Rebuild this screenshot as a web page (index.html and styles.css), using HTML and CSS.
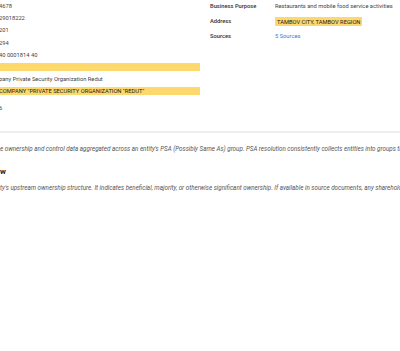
FILE: index.html
```html
<!DOCTYPE html>
<html lang="en">
<head>
    <meta charset="UTF-8">
    <meta name="viewport" content="width=device-width, initial-scale=1.0">
    <title>Entity profile</title>
    <link rel="stylesheet" href="styles.css">
</head>
<body>

<main class="page">
    <section class="details">
        <div class="col col-left">
            <div class="row"><span class="value">4678</span></div>
            <div class="row"><span class="value">29018222</span></div>
            <div class="row"><span class="value">201</span></div>
            <div class="row"><span class="value">294</span></div>
            <div class="row"><span class="value">40 0001814 40</span></div>
            <div class="row"><span class="value mark mark-full">&nbsp;</span></div>
            <div class="row"><span class="value">pany Private Security Organization Redut</span></div>
            <div class="row"><span class="value mark mark-full">COMPANY "PRIVATE SECURITY ORGANIZATION "REDUT"</span></div>
            <div class="row row-last"><span class="value">6</span></div>
        </div>

        <div class="col col-right">
            <div class="row">
                <span class="label">Business Purpose</span>
                <span class="value">Restaurants and mobile food service activities</span>
            </div>
            <div class="row">
                <span class="label">Address</span>
                <span class="value"><span class="mark">TAMBOV CITY, TAMBOV REGION</span></span>
            </div>
            <div class="row">
                <span class="label">Sources</span>
                <span class="value"><a class="link" href="#">5 Sources</a></span>
            </div>
        </div>
    </section>

    <hr class="divider">

    <section class="overview">
        <p class="note">e ownership and control data aggregated across an entity's PSA (Possibly Same As) group. PSA resolution consistently collects entities into groups that</p>
        <h2 class="section-title">w</h2>
        <p class="note">ty's upstream ownership structure. It indicates beneficial, majority, or otherwise significant ownership. If available in source documents, any shareholders</p>
    </section>
</main>

</body>
</html>
```

FILE: styles.css
```css
/* Основные стили */
body {
    margin: 0;
    padding: 0;
    background-color: #fff;
    color: #444;
    font-family: Roboto, 'Liberation Sans', sans-serif;
    font-size: 5.75px;
    overflow: hidden;
}
.page {
    width: 400px;
    overflow: hidden;
}

/* Блок реквизитов */
.details {
    display: grid;
    grid-template-columns: 205px 1fr;
}
.col-left {
    margin-left: -1px;
}
.col-left .row {
    height: 12.2px;
    display: flex;
    align-items: center;
    white-space: nowrap;
}
.col-left .row-last {
    height: 15.2px;
    align-items: flex-end;
    padding-bottom: 2px;
    box-sizing: border-box;
}
.col-right {
    margin-top: -1.5px;
}
.col-right .row {
    height: 15px;
    display: flex;
    align-items: center;
    white-space: nowrap;
}
.label {
    width: 65px;
    margin-left: 5px;
    color: #333;
    font-weight: 500;
}
.value {
    color: #444;
}
.mark {
    background-color: #fdd86d;
    color: #222;
    padding: 1.5px 2px;
}
.mark-full {
    display: block;
    width: 201px;
    padding: 1px 0;
    line-height: 6px;
}
.link {
    color: #3b7be0;
    text-decoration: none;
}

/* Разделитель */
.divider {
    margin: 18px 0 0 0;
    border: none;
    border-top: 2px solid #eeeeee;
}

/* Описание */
.overview {
    margin-top: 11px;
}
.note {
    margin: 0;
    height: 10px;
    line-height: 10px;
    font-size: 6.25px;
    font-style: italic;
    color: #555;
    white-space: nowrap;
}
.section-title {
    margin: 12px 0 5px 0;
    height: 12px;
    line-height: 12px;
    font-size: 8px;
    font-weight: bold;
    color: #222;
}
```
